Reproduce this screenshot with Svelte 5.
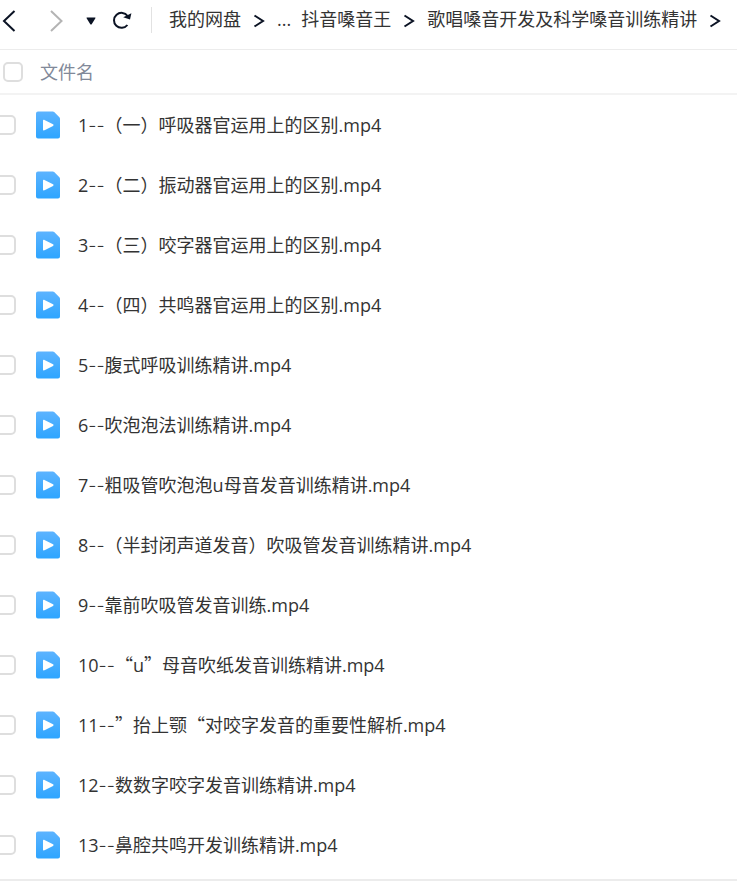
<script>
  const crumbs = ['我的网盘', '...', '抖音嗓音王', '歌唱嗓音开发及科学嗓音训练精讲'];

  const files = [
    '1--（一）呼吸器官运用上的区别.mp4',
    '2--（二）振动器官运用上的区别.mp4',
    '3--（三）咬字器官运用上的区别.mp4',
    '4--（四）共鸣器官运用上的区别.mp4',
    '5--腹式呼吸训练精讲.mp4',
    '6--吹泡泡法训练精讲.mp4',
    '7--粗吸管吹泡泡u母音发音训练精讲.mp4',
    '8--（半封闭声道发音）吹吸管发音训练精讲.mp4',
    '9--靠前吹吸管发音训练.mp4',
    '10--“u”母音吹纸发音训练精讲.mp4',
    '11--”抬上颚“对咬字发音的重要性解析.mp4',
    '12--数数字咬字发音训练精讲.mp4',
    '13--鼻腔共鸣开发训练精讲.mp4'
  ];

  let selected = $state([]);
  let allSelected = $derived(selected.length === files.length);

  function toggleAll() {
    selected = allSelected ? [] : [...files];
  }

  // curly quotes are full width in Chinese names, dashes get a wider face
  function runs(name) {
    return name.split(/(--|[“”])/).filter(Boolean);
  }
</script>

<svelte:head>
  <title>我的网盘</title>
</svelte:head>

<div class="drive">
  <header>
    <div class="nav">
      <button class="back" aria-label="后退">
        <svg width="14" height="22" viewBox="0 0 14 22"><path d="M12.500 1 2 11l10.500 10" /></svg>
      </button>
      <button class="forward" aria-label="前进" disabled>
        <svg width="14" height="22" viewBox="0 0 14 22"><path d="M1 1 11.500 11 1 21" /></svg>
      </button>
      <button class="history" aria-label="历史记录">
        <svg width="10" height="8" viewBox="0 0 10 8"><path d="M1 .5h8q.9 0 .4.8L5.700 7.200a.8.8 0 0 1-1.400 0L.6 1.300Q.1.500 1 .5z" /></svg>
      </button>
      <button class="refresh" aria-label="刷新">
        <svg width="20" height="20" viewBox="0 0 20 20">
          <path class="ring" d="M15.400 14a7.500 7.500 0 1 1 .2-9" />
          <path class="tip" d="M19.400 2.200 18 8.600l-6.800-2.400z" />
        </svg>
      </button>
    </div>
    <nav aria-label="路径">
      {#each crumbs as crumb}
        <a href="#path">{crumb}</a>
        {#if crumb !== '...'}
          <svg class="sep" width="12" height="14" viewBox="0 0 12 14"><path d="M1.500 1.500 10 7l-8.500 5.500" /></svg>
        {/if}
      {/each}
    </nav>
  </header>

  <div class="columns">
    <input type="checkbox" id="all" aria-label="全选" checked={allSelected} onchange={toggleAll} />
    <label for="all">文件名</label>
  </div>

  <ul>
    {#each files as file, i}
      <li>
        <input type="checkbox" id="file-{i}" value={file} bind:group={selected} />
        <svg class="icon" width="26" height="28" viewBox="0 0 26 28">
          <defs>
            <linearGradient id="blue-{i}" x1="0" y1="0" x2="0" y2="1">
              <stop offset="0" stop-color="#5cb3ff" />
              <stop offset="1" stop-color="#2ea5ff" />
            </linearGradient>
          </defs>
          <path fill="url(#blue-{i})" d="M3 .5h14.800q.8 0 1.400.6l5.200 5.200q.6.6.6 1.400v17.800a2 2 0 0 1-2 2H3a2 2 0 0 1-2-2v-23a2 2 0 0 1 2-2z" />
          <path fill="#fff" d="M8 9.800c0-.9.800-1.300 1.500-.9l8.500 4.400c.7.400.7 1.200 0 1.600l-8.500 4.400c-.7.400-1.500 0-1.500-.9z" />
        </svg>
        <label for="file-{i}">{#each runs(file) as run}<span class:dash={run === '--'} class:quote={run === '“' || run === '”'}>{run}</span>{/each}</label>
      </li>
    {/each}
  </ul>
</div>

<style>
  :global(body) {
    margin: 0;
    background: #fff;
    overflow-x: hidden;
  }

  .drive {
    font-family: 'Open Sans', 'Noto Sans CJK SC', sans-serif;
    font-size: 18px;
    line-height: 24px;
    color: #333;
    overflow: hidden;
  }

  header {
    display: flex;
    align-items: center;
    height: 49px;
    border-bottom: 1px solid #ececec;
  }

  .nav {
    display: flex;
    align-items: center;
    height: 26px;
    margin-bottom: 9px;
    padding-left: 2px;
    border-right: 1px solid #e2e2e2;
  }

  button {
    display: flex;
    margin-top: 2px;
    padding: 0;
    border: none;
    background: none;
    cursor: pointer;
  }

  button svg,
  .sep {
    display: block;
    fill: none;
    stroke: #0b1324;
    stroke-width: 2;
  }

  .forward {
    margin-left: 34px;
  }

  .forward svg {
    stroke: #b4b4b4;
  }

  .history {
    margin-left: 22px;
  }

  .history svg {
    fill: #0b1324;
    stroke: none;
  }

  .refresh {
    margin-right: 19px;
    margin-left: 16px;
  }

  .refresh .tip {
    fill: #0b1324;
    stroke: none;
  }

  nav {
    display: flex;
    align-items: center;
    margin-bottom: 11px;
    padding-left: 17px;
    white-space: nowrap;
  }

  nav a {
    color: #333;
    text-decoration: none;
  }

  nav a + a {
    margin-left: 10px;
  }

  .sep {
    margin: 4px 12px 0;
  }

  .columns {
    display: flex;
    align-items: center;
    gap: 17px;
    height: 43px;
    padding-left: 3px;
    border-bottom: 2px solid #f3f3f3;
    color: #818999;
  }

  input {
    appearance: none;
    flex: none;
    box-sizing: border-box;
    width: 20px;
    height: 20px;
    margin: 0;
    border: 2px solid #dedede;
    border-radius: 5px;
    background: #fff;
  }

  input:checked {
    border-color: #2ea5ff;
    background: #2ea5ff;
  }

  ul {
    margin: 0;
    padding: 0 0 4px;
    list-style: none;
    border-bottom: 2px solid #ececec;
  }

  li {
    display: flex;
    align-items: center;
    height: 60px;
    margin-left: -4px;
  }

  .icon {
    flex: none;
    margin: 0 17px 1px 19px;
  }

  li label {
    white-space: nowrap;
  }

  .dash {
    font-family: Inter, sans-serif;
    font-weight: 300;
  }

  .quote {
    font-family: 'Noto Sans CJK SC', sans-serif;
  }
</style>
